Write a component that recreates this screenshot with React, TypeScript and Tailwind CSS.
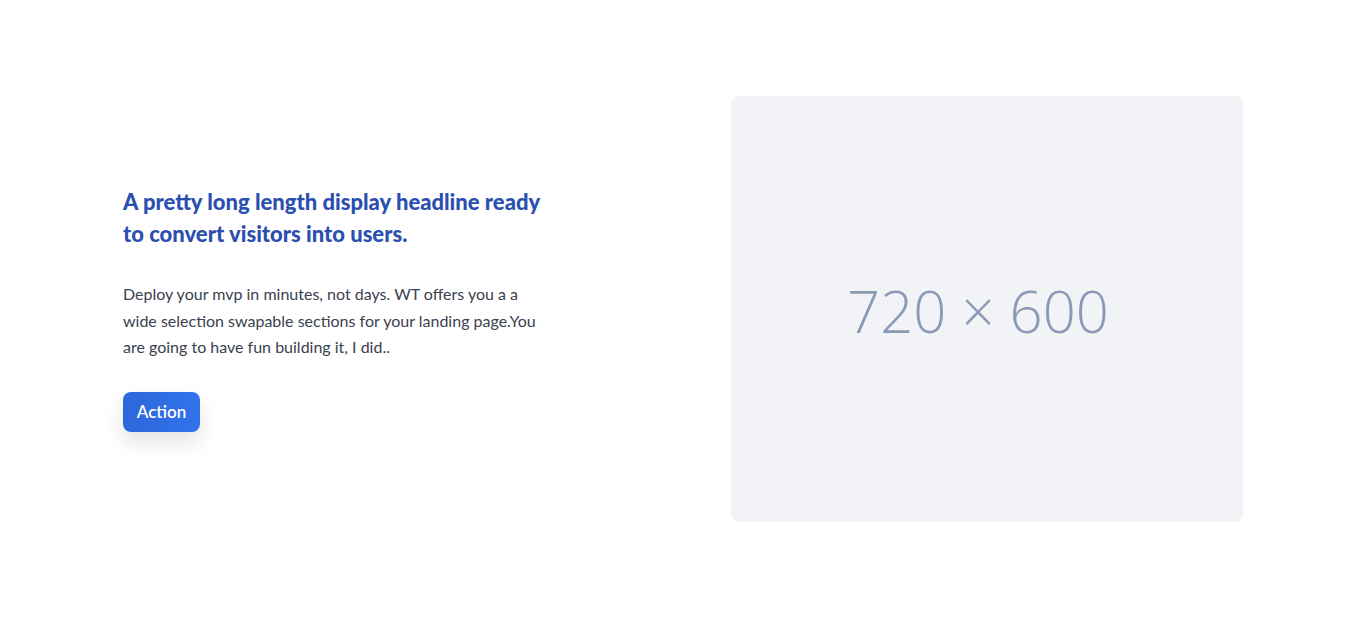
export default function App() {
  return (
    <section className="bg-white py-24" style={{ fontFamily: "Lato, 'Noto Sans', sans-serif" }}>
      <div className="max-w-[1120px] mx-auto flex items-center justify-between">
        {/* Text column */}
        <div className="w-[430px]">
          <h2 className="text-[22px] leading-[32px] font-black text-[#2b4fb0] font-['Lato',sans-serif]">
            A pretty long length display headline ready to convert visitors into users.
          </h2>
          <p className="mt-[31px] text-base leading-[26.5px] text-[#3a4150]">
            Deploy your mvp in minutes, not days. WT offers you a a wide selection swapable sections for your landing page.You are going to have fun building it, I did..
          </p>
          <button className="mt-[31px] h-10 w-[77px] rounded-lg bg-gradient-to-r from-[#2d67dc] to-[#3172ea] text-white text-[17px] font-semibold shadow-[0_10px_20px_rgba(15,23,42,0.12)]">
            Action
          </button>
        </div>

        {/* Placeholder image */}
        <div className="w-[512px] h-[426px] rounded-lg bg-[#f1f3f7] flex items-center justify-center">
          <span className="text-[58px] font-light text-[#8a9ab5] font-['Open_Sans',sans-serif] pr-[18px] pt-[2px]">
            720 × 600
          </span>
        </div>
      </div>
    </section>
  );
}
